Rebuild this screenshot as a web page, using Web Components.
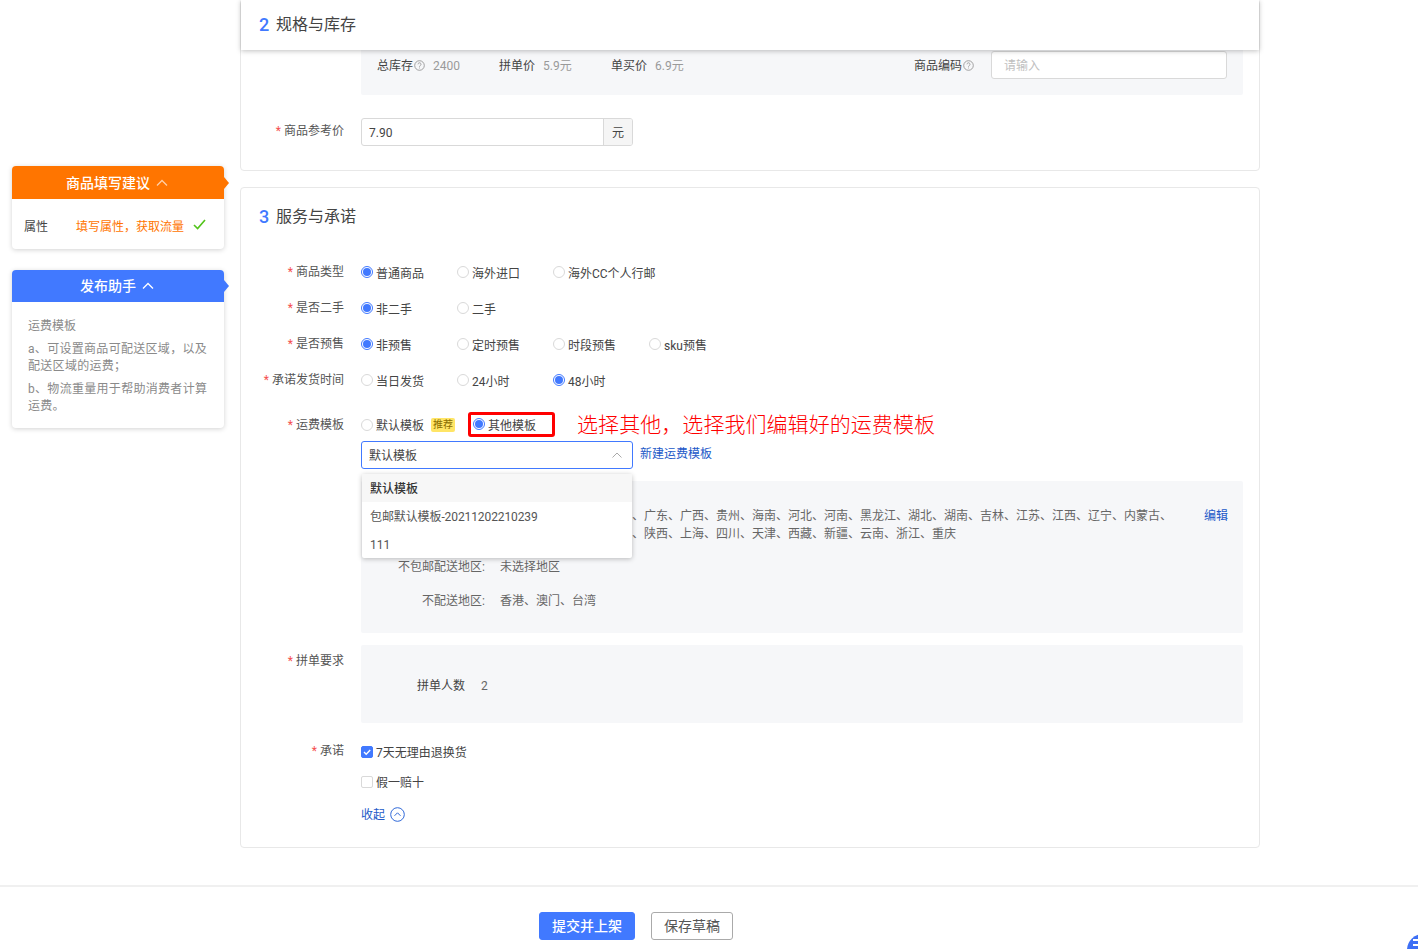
<!DOCTYPE html>
<html lang="zh-CN">
<head>
<meta charset="utf-8">
<title>发布商品</title>
<style>
html,body{margin:0;padding:0;background:#fff;}
body{font:12px/18px Roboto,"Noto Sans CJK SC",sans-serif;color:#333;}
</style>
</head>
<body>
<x-page>
  <x-side slot="side">
    <x-tip-card color="#ff7500" title="商品填写建议" hh="33">
      <x-suggest></x-suggest>
    </x-tip-card>
    <x-tip-card color="#4179ff" title="发布助手" hh="32">
      <x-help></x-help>
    </x-tip-card>
  </x-side>

  <x-sticky-head slot="head" num="2" title="规格与库存"></x-sticky-head>

  <x-card slot="main" style="height:172px;margin-top:-1px">
    <x-stock-box></x-stock-box>
    <x-row label="商品参考价" style="margin-top:23px"><x-price value="7.90" unit="元"></x-price></x-row>
  </x-card>

  <x-card slot="main" style="margin-top:16px;height:661px" num="3" title="服务与承诺">
    <x-radio-row label="商品类型" options="普通商品*|海外进口|海外CC个人行邮"></x-radio-row>
    <x-radio-row label="是否二手" options="非二手*|二手"></x-radio-row>
    <x-radio-row label="是否预售" options="非预售*|定时预售|时段预售|sku预售"></x-radio-row>
    <x-radio-row label="承诺发货时间" options="当日发货|24小时|48小时*"></x-radio-row>
    <x-row label="运费模板" top="4" style="margin-top:14px"><x-freight></x-freight></x-row>
    <x-row label="拼单要求" top="7" style="margin-top:12px"><x-group-req></x-group-req></x-row>
    <x-row label="承诺" top="4" style="margin-top:15px"><x-promise></x-promise></x-row>
  </x-card>

  <x-footer slot="foot"></x-footer>
</x-page>

<script>
const base = `*,:host{box-sizing:border-box}`;
const Q = `<svg width="11" height="11" viewBox="0 0 11 11" fill="none" stroke="#8c8c8c" stroke-width=".8"><circle cx="5.5" cy="5.5" r="4.8"/><path d="M4 4.3a1.5 1.5 0 1 1 2.3 1.3c-.5.3-.8.6-.8 1.1"/><path d="M5.5 7.6v.8"/></svg>`;
function def(name, render){
  customElements.define(name, class extends HTMLElement{
    connectedCallback(){
      if(this.shadowRoot) return;
      const s=this.attachShadow({mode:'open'});
      s.innerHTML=`<style>${base}</style>`+render(this);
    }
  });
}

def('x-page',()=>`<style>
:host{display:grid;grid-template-columns:240px 1020px 1fr;grid-template-rows:auto auto;height:949px;overflow:hidden;position:relative;align-content:start}
.side{grid-column:1;grid-row:1}
.main{grid-column:2;grid-row:1;position:relative;display:flex;flex-direction:column}
.foot{grid-column:1/-1;grid-row:2}
.fab{position:absolute;left:1407px;top:934px;width:32px;height:32px;border-radius:50%;background:#3d6ff5;overflow:hidden}
.fab i{position:absolute;left:6px;background:#fff;height:2px;width:8px}
</style>
<div class="side"><slot name="side"></slot></div>
<div class="main"><slot name="main"></slot><slot name="head"></slot></div>
<div class="foot"><slot name="foot"></slot></div>
<div class="fab"><i style="top:5px"></i><i style="top:10px"></i></div>`);

def('x-side',()=>`<style>:host{display:flex;flex-direction:column;gap:21px;padding:166px 16px 0 12px}</style><slot></slot>`);

def('x-tip-card',h=>{const c=h.getAttribute('color'),hh=h.getAttribute('hh');return `<style>
:host{display:block;background:#fff;border-radius:4px;box-shadow:0 1px 5px rgba(0,0,0,.18);position:relative}
.h{height:${hh}px;background:${c};color:#fff;border-radius:4px 4px 0 0;display:flex;align-items:center;justify-content:center;gap:6px;font-size:14px;font-weight:500;padding-right:2px}
.a{position:absolute;right:-5px;top:${hh/2-6}px;width:0;height:0;border-left:5px solid ${c};border-top:6px solid transparent;border-bottom:6px solid transparent}
</style><div class="h"><span>${h.getAttribute('title')}</span><svg width="12" height="8" viewBox="0 0 12 8" fill="none" stroke="#fff" stroke-opacity="${c==='#ff7500'?.65:1}" stroke-width="1.3"><path d="M1 6.5 6 1.5l5 5"/></svg></div><div class="a"></div><slot></slot>`});

def('x-suggest',()=>`<style>
:host{display:flex;height:50px;align-items:center;padding:5px 0 0 12px}
.l{width:52px;color:#444}.t{color:#ff7500;width:117px}
svg{margin-top:-5px}
</style><span class="l">属性</span><span class="t">填写属性，获取流量</span><svg width="13" height="11" viewBox="0 0 13 11" fill="none" stroke="#52c41a" stroke-width="1.6"><path d="M1 6l3.6 3.6L12 1"/></svg>`);

def('x-help',()=>`<style>
:host{display:block;padding:16px 16px 0;color:#8a8a8a;height:126px}
p{margin:0 0 6px;line-height:17px;letter-spacing:.3px}
p.h{letter-spacing:0;margin-bottom:6px}
</style><p class="h">运费模板</p><p>a、可设置商品可配送区域，以及配送区域的运费；</p><p>b、物流重量用于帮助消费者计算运费。</p>`);

def('x-sticky-head',h=>`<style>
:host{position:absolute;left:1px;right:1px;top:0;height:50px;background:#fff;box-shadow:0 1px 5px rgba(0,0,0,.25);display:flex;align-items:center;padding:0 0 0 18px}
b{color:#4179ff;font-size:18px;font-weight:500;width:17px}span{font-size:16px;color:#444}
</style><b>${h.getAttribute('num')}</b><span>${h.getAttribute('title')}</span>`);

def('x-card',h=>{const n=h.getAttribute('num');return `<style>
:host{display:block;border:1px solid #e8e8e8;border-radius:4px;background:#fff;padding-right:16px}
.t{display:flex;align-items:center;height:24px;margin:17px 0 25px 18px}
b{color:#4179ff;font-size:18px;font-weight:500;width:17px}span{font-size:16px;color:#444}
</style>${n?`<div class="t"><b>${n}</b><span>${h.getAttribute('title')}</span></div>`:''}<slot></slot>`});

def('x-row',h=>{const top=h.getAttribute('top');return `<style>
:host{display:grid;grid-template-columns:103px 1fr;column-gap:17px;align-items:${top?'start':'center'}}
.l{text-align:right;color:#555;padding-top:${top||0}px;${top?'':'padding-bottom:2px;'}}
i{color:#f5504e;font-style:normal;margin-right:3px}
</style><div class="l"><i>*</i>${h.getAttribute('label')}</div><div><slot></slot></div>`});

def('x-radio',h=>{const on=h.hasAttribute('checked');return `<style>
:host{display:inline-flex;align-items:center;gap:3px;color:#444;white-space:nowrap}
.c{width:12px;height:12px;border-radius:50%;border:1px solid ${on?'#4179ff':'#d9d9d9'};background:#fff;display:flex;align-items:center;justify-content:center;flex:none;margin-top:-1px}
.c i{width:8px;height:8px;border-radius:50%;background:#4179ff;display:${on?'block':'none'}}
.t{padding-top:2px}
</style><span class="c"><i></i></span><span class="t"><slot></slot></span>`});

def('x-radio-row',h=>{
  const o=h.getAttribute('options').split('|');
  return `<style>
:host{display:grid;grid-template-columns:103px 1fr;column-gap:17px;align-items:center;height:36px}
.l{text-align:right;color:#555}
i{color:#f5504e;font-style:normal;margin-right:3px}
.o{display:flex;padding-top:1px}.o x-radio{width:96px}
</style><div class="l"><i>*</i>${h.getAttribute('label')}</div><div class="o">${o.map(t=>{const c=t.endsWith('*');return `<x-radio ${c?'checked':''}>${t.replace('*','')}</x-radio>`}).join('')}</div>`});

def('x-stock-box',()=>`<style>
:host{display:flex;align-items:center;height:95px;margin-left:120px;padding:51px 16px 16px;background:#f6f7f9;border-radius:2px}
.i{display:flex;align-items:center}
.k{color:#444;padding-top:2px}.v{color:#9a9a9a;margin-left:8px;padding-top:2px}
svg{margin-left:1px}
.in{width:236px;height:28px;border:1px solid #d9d9d9;border-radius:3px;background:#fff;color:#bfbfbf;padding:0 12px;line-height:28px;margin-left:17px}
</style>
<div class="i" style="width:122px"><span class="k">总库存</span>${Q}<span class="v">2400</span></div>
<div class="i" style="width:112px"><span class="k">拼单价</span><span class="v">5.9元</span></div>
<div class="i"><span class="k">单买价</span><span class="v">6.9元</span></div>
<div class="i" style="margin-left:auto"><span class="k">商品编码</span>${Q}<div class="in">请输入</div></div>`);

def('x-price',h=>`<style>
:host{display:flex;width:272px;height:28px;border:1px solid #d9d9d9;border-radius:3px;line-height:28px;color:#444}
.v{flex:1;padding-left:7px}.u{width:29px;background:#f5f5f5;border-left:1px solid #d9d9d9;text-align:center;border-radius:0 2px 2px 0}
</style><div class="v">${h.getAttribute('value')}</div><div class="u">${h.getAttribute('unit')}</div>`);

def('x-freight',()=>`<style>
:host{display:block}
.r{display:flex;align-items:center;height:25px;padding-top:1px}
.b{background:#ffe566;color:#8a6d00;font-size:10px;line-height:14px;height:14px;padding:0 2px;border-radius:2px;margin-left:7px;width:24px;text-align:center;white-space:nowrap}
.mark{border:3px solid #f00;border-radius:3px;width:87px;height:25px;margin-top:-1px;margin-left:13px;display:flex;align-items:center;padding-left:2px}
.note{color:#f00;font-size:21px;line-height:25px;margin-left:22px;white-space:nowrap;font-weight:300;letter-spacing:.06px;padding-top:1px}
.s{display:flex;align-items:center;margin-top:4px;position:relative}
.sel{width:272px;height:28px;border:1px solid #4179ff;border-radius:3px;display:flex;align-items:center;justify-content:space-between;padding:0 10px 0 7px;color:#444}
.sel span{padding-top:2px}
a{color:#2259c8;margin-left:7px;padding-bottom:2px}
.dd{position:absolute;left:1px;top:33px;width:270px;background:#fff;border-radius:2px;box-shadow:0 1px 5px rgba(0,0,0,.25);z-index:2}
.dd div{height:28px;line-height:30px;padding-left:8px;color:#555}
.dd .on{background:#f7f7f7;font-weight:500;color:#333}
.p{margin-top:12px;height:152px;background:#f6f7f9;padding-top:26px;position:relative;color:#666;border-radius:2px}
.f{display:grid;grid-template-columns:124px 672px;column-gap:15px}
.f span{text-align:right}
.e{position:absolute;right:15px;top:26px;color:#2259c8}
</style>
<div class="r"><x-radio>默认模板</x-radio><span class="b">推荐</span><div class="mark"><x-radio checked>其他模板</x-radio></div><span class="note">选择其他，选择我们编辑好的运费模板</span></div>
<div class="s"><div class="sel"><span>默认模板</span><svg width="10" height="6" viewBox="0 0 10 6" fill="none" stroke="#aaa"><path d="M.5 5.5 5 1l4.5 4.5"/></svg></div><a>新建运费模板</a>
<div class="dd"><div class="on">默认模板</div><div style="letter-spacing:-.1px">包邮默认模板-20211202210239</div><div>111</div></div></div>
<div class="p">
<div class="f"><span>包邮配送地区:</span><div>安徽、北京、福建、甘肃、广东、广西、贵州、海南、河北、河南、黑龙江、湖北、湖南、吉林、江苏、江西、辽宁、内蒙古、宁夏、青海、山东、山西、陕西、上海、四川、天津、西藏、新疆、云南、浙江、重庆</div></div>
<div class="f" style="margin-top:15px"><span>不包邮配送地区:</span><div>未选择地区</div></div>
<div class="f" style="margin-top:16px"><span>不配送地区:</span><div>香港、澳门、台湾</div></div>
<span class="e">编辑</span></div>`);

def('x-group-req',()=>`<style>
:host{display:flex;align-items:center;height:78px;background:#f6f7f9;padding:3px 0 0 56px;border-radius:2px}
.k{color:#444;width:64px}.v{color:#666}
</style><span class="k">拼单人数</span><span class="v">2</span>`);

def('x-promise',()=>`<style>
:host{display:block;color:#444}
.r{display:flex;align-items:center;height:28px;gap:3px;margin-bottom:2px}
.r>span:not(.c){padding-top:2px}
.c{width:12px;height:12px;border:1px solid #d9d9d9;border-radius:2px;background:#fff;display:block}
.c.on{background:#4179ff;border-color:#4179ff}
.c svg{display:block}
.m{color:#2259c8;gap:5px;margin:4px 0 0}
</style>
<div class="r"><span class="c on"><svg width="10" height="10" viewBox="0 0 10 10" fill="none" stroke="#fff" stroke-width="1.4"><path d="M2 5l2.2 2.2L8.2 3"/></svg></span><span>7天无理由退换货</span></div>
<div class="r"><span class="c"></span><span>假一赔十</span></div>
<div class="r m"><span>收起</span><svg width="15" height="15" viewBox="0 0 15 15" fill="none" stroke="#2f68d8" stroke-width="1"><circle cx="7.5" cy="7.5" r="6.8"/><path d="M4.5 8.8l3-3 3 3"/></svg></div>`);

def('x-footer',()=>`<style>
:host{display:flex;margin-top:37px;border-top:2px solid #f0f0f0;padding:25px 0 0 539px;gap:16px}
div{height:28px;border-radius:3px;text-align:center;line-height:26px;font-size:14px}
.a{width:96px;background:#4179ff;color:#fff;border:1px solid #4179ff;font-weight:500}
.b{width:82px;background:#fff;color:#555;border:1px solid #aaa}
</style><div class="a">提交并上架</div><div class="b">保存草稿</div>`);
</script>
</body>
</html>
